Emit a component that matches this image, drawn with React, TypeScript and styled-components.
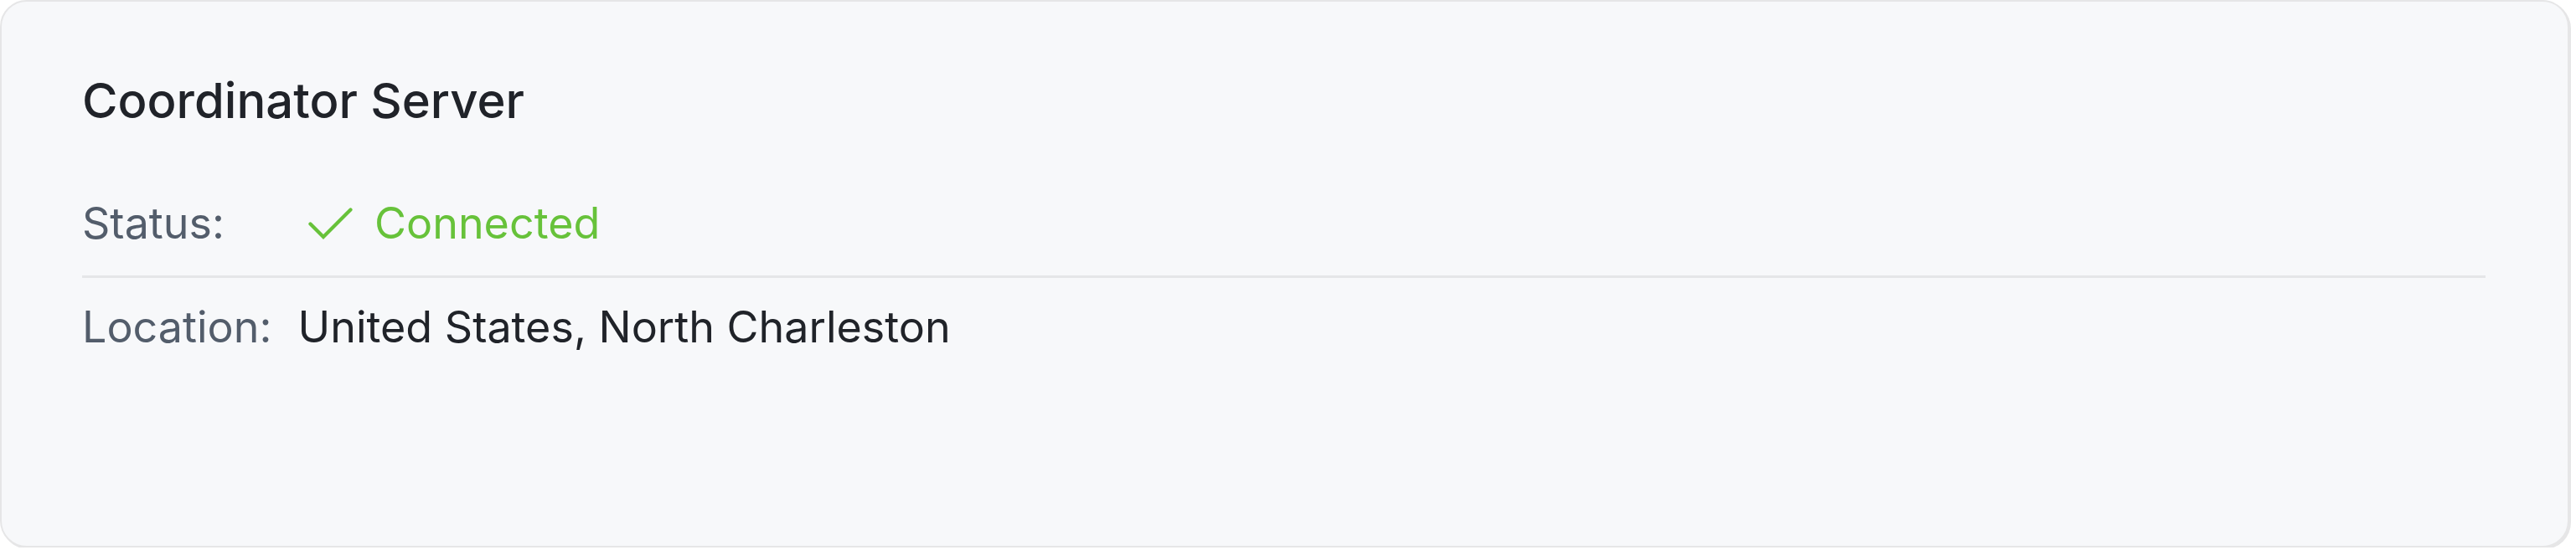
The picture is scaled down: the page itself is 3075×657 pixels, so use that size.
import React from "react";
import styled, { createGlobalStyle } from "styled-components";

const GlobalStyle = createGlobalStyle`
  html, body {
    margin: 0;
    padding: 0;
    background: #ffffff;
  }
  body {
    font-family: Inter, "Noto Sans", "Liberation Sans", sans-serif;
    -webkit-font-smoothing: antialiased;
  }
`;

const Card = styled.section`
  box-sizing: border-box;
  width: 3067px;
  height: 654px;
  background: #f7f8fa;
  border: 2px solid #e6e6e7;
  border-radius: 32px;
  box-shadow: 2px 2px 0 #e6e6e7;
  padding: 75px 98px 0 96px;
  display: flex;
  flex-direction: column;
`;

const Title = styled.h2`
  margin: 0 0 65px;
  font-size: 58px;
  line-height: 87px;
  font-weight: 500;
  color: #202329;
  letter-spacing: 0;
`;

const Row = styled.div<{ $divided?: boolean }>`
  display: flex;
  align-items: center;
  padding: ${(p) => (p.$divided ? "0 0 25px" : "21px 0 0")};
  border-bottom: ${(p) => (p.$divided ? "3px solid #e5e6e8" : "none")};
`;

const Label = styled.span`
  flex: 0 0 226px;
  margin-right: 31px;
  font-size: 52px;
  line-height: 75px;
  white-space: nowrap;
  color: #535d6b;
`;

const Value = styled.span<{ $tone?: "success" | "default" }>`
  display: inline-flex;
  align-items: center;
  gap: 20px;
  font-size: 52px;
  line-height: 75px;
  color: ${(p) => (p.$tone === "success" ? "#67c23a" : "#202329")};
`;

const CheckIcon = styled.svg`
  width: 68px;
  height: 68px;
  margin-left: 4px;
  flex: 0 0 auto;
  fill: currentColor;
`;

export default function App() {
  return (
    <>
      <GlobalStyle />
      <Card>
        <Title>Coordinator Server</Title>
        <Row $divided>
          <Label>Status:</Label>
          <Value $tone="success">
            <CheckIcon viewBox="0 0 1024 1024" aria-hidden="true">
              <path d="M406.656 706.944 195.84 496.256a32 32 0 1 0-45.248 45.248l256 256 512-512a32 32 0 0 0-45.248-45.248L406.592 706.944z" />
            </CheckIcon>
            Connected
          </Value>
        </Row>
        <Row>
          <Label>Location:</Label>
          <Value>United States, North Charleston</Value>
        </Row>
      </Card>
    </>
  );
}
